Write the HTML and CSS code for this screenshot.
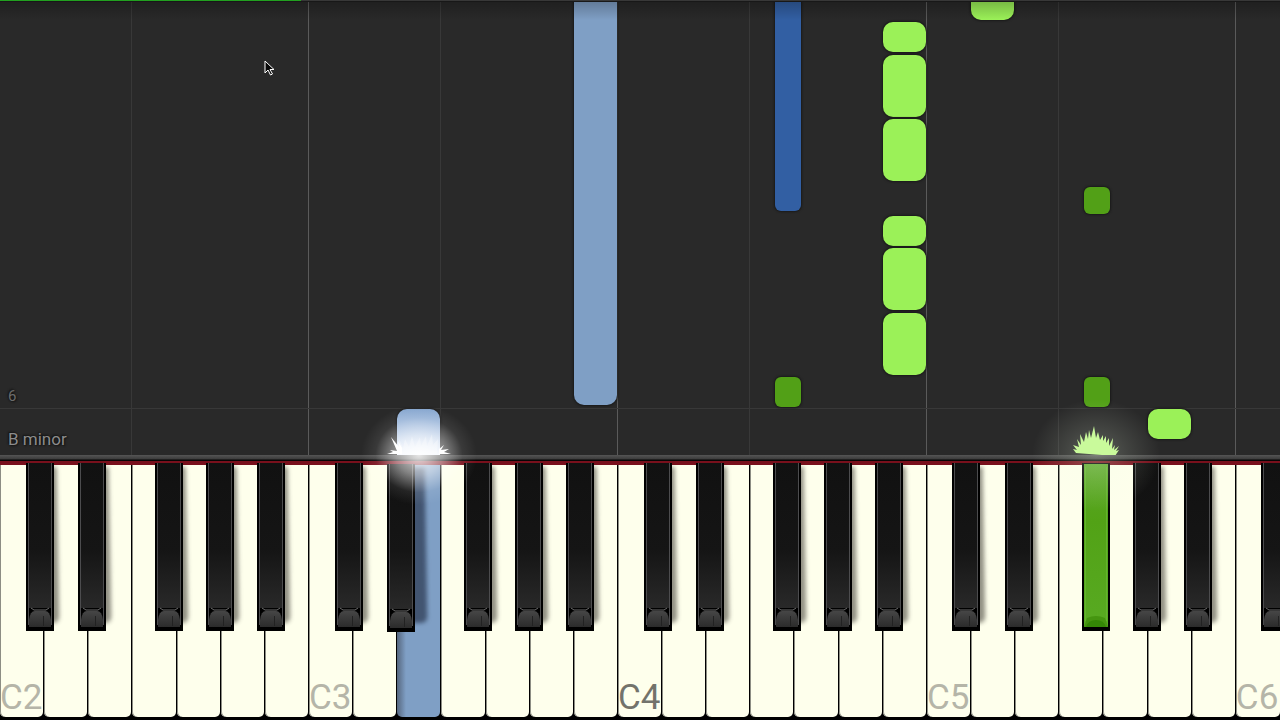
FILE: index.html
```html
<!DOCTYPE html>
<html lang="en">
<head>
<meta charset="utf-8">
<meta name="viewport" content="width=device-width, initial-scale=1">
<title>Piano roll</title>
<link rel="stylesheet" href="styles.css">
</head>
<body>
<main class="player">
  <section class="roll" aria-label="Falling notes">
    <div class="octave-lines" id="lines"></div>
    <div class="measure"></div>
    <span class="measure-number">6</span>
    <span class="chord">B minor</span>
    <div id="notes"></div>
    <div class="top-shade"></div>
    <div class="progress"><div class="progress-fill"></div></div>
    <svg class="cursor" width="12" height="18" viewBox="0 0 12 18" aria-hidden="true"><path d="M1 1v12l3-3 2.500 5 2-1-2.500-4.500h4z" fill="#080808" stroke="#fff" stroke-linejoin="round"/></svg>
  </section>
  <div class="rail"></div>
  <div class="felt"></div>
  <ul class="keyboard" id="keyboard"></ul>
  <div class="glow glow-blue">
    <svg class="spark" viewBox="0 0 64 36" aria-hidden="true">
      <path fill="#fff" d="M0 35l6-2-3-2 7 1-6-14 8 10-1-6 4 7v6zM64 35l-7-2 5-3-8 1 3-5-5 4v5z"/>
      <path fill="#fff" fill-opacity=".3" d="M10 35l2-15 4 9 2-9 4 8 3-11 3 11 5-10 1 9 5-10 1 10 5-12 1 11 5-6-1 15z"/>
    </svg>
  </div>
  <div class="glow glow-green">
    <svg class="spark" viewBox="0 0 64 36" aria-hidden="true"><path fill="#c9fa9b" d="M12 34l-3-4 4 1-4-5 6 2-2-8 4 6-1-11 4 8 2-10 2 7 1-9 2 8 3-12 2 12 2-6 2 8 3-5v6l3-5 0 7 3-5 0 8 4-8-1 11 3-4-1 5 5-4-3 5 3-1-4 6z"/></svg>
  </div>
</main>
<svg class="defs" aria-hidden="true">
  <defs>
    <linearGradient id="body" x1="0" y1="0" x2="0" y2="1"><stop offset="0" stop-color="#111"/><stop offset=".6" stop-color="#151515"/><stop offset="1" stop-color="#292929"/></linearGradient>
    <linearGradient id="lip" x1="0" y1="0" x2="0" y2="1"><stop offset="0" stop-color="#464646"/><stop offset="1" stop-color="#2b2b2b"/></linearGradient>
    <linearGradient id="leaf" x1="0" y1="0" x2="0" y2="1"><stop offset="0" stop-color="#5ba728"/><stop offset=".35" stop-color="#52a216"/><stop offset="1" stop-color="#58aa22"/></linearGradient>
    <symbol id="sharp" viewBox="0 0 28 168">
      <path d="M0 0h28v168H0z"/>
      <path d="M3 0h22v145H3z" fill="url(#body)"/>
      <path d="M2.500 0v162M25.500 0v162" stroke="#4c4c4e"/>
      <path d="M3 164v-7q1-9 6-9h10q5 0 6 9v7z" fill="url(#lip)"/>
      <path d="M5 145l3 2h12l3-2" fill="none" stroke="#6c6c6c"/>
      <path d="M17.500 153v10" stroke="#222"/>
    </symbol>
    <symbol id="sharp-lit" viewBox="0 0 28 168">
      <path d="M0 0h28v168H0z"/>
      <path d="M2 1h24v163H2z" fill="url(#leaf)"/>
      <path d="M3.500 4v154M24.500 4v154" stroke="#62b42c"/>
      <path d="M2 164l3-9q9-4 18 0l3 9z" fill="#459510"/>
      <path d="M4 164q2-7 10-7t10 7z" fill="#348706"/>
    </symbol>
  </defs>
</svg>
<script src="app.js"></script>
</body>
</html>
```
FILE: styles.css
```css
* { box-sizing: border-box; }
body { margin: 0; background: #000; font-family: Roboto, "Liberation Sans", sans-serif; overflow: hidden; }
.player { --keys: 29; position: relative; display: flex; flex-direction: column; min-height: 100vh; }
.defs { position: absolute; width: 0; height: 0; }

.roll { position: relative; flex: 1; background: #292929; overflow: hidden; }
.octave-lines { position: absolute; inset: 0; }
.line { position: absolute; top: 0; bottom: 0; left: calc(var(--k) * 100% / var(--keys) - 1px); width: 1px; background: #383838; }
.line-c { background: #5a5a5a; }
.measure { position: absolute; left: 0; right: 0; bottom: 46px; height: 1px; background: #383838; }
.measure-number, .chord { position: absolute; left: 8px; text-shadow: 1px 1px 2px #111, -1px -1px 2px #111; }
.measure-number { bottom: 50px; font-size: 15px; line-height: 18px; color: #6c6c6c; }
.chord { bottom: 6px; font-size: 17px; line-height: 20px; color: #8c8c8c; }

.note { position: absolute; left: calc(var(--k) * 100% / var(--keys)); width: calc(100% / var(--keys) - 1px); bottom: var(--start); height: var(--length); border-radius: 10px; box-shadow: 0 0 2px 1px #1a1a1a; }
.right { background: #9bf158; }
.left { background: #7f9fc5; }
.note.dark { width: 26px; border-radius: 6px; }
.right.dark { background: #52a017; }
.left.dark { background: #325fa3; }
.left.playing { background: linear-gradient(#86a6cf, #b4c9e5 50%, #f1f6ff); border-radius: 10px 10px 0 0; }

.top-shade { position: absolute; inset: 0 0 auto; height: 20px; background: linear-gradient(rgba(0, 0, 0, .25), transparent); }
.progress { position: absolute; inset: 0 0 auto; height: 2px; background: #383838; border-bottom: 1px solid #181818; }
.progress-fill { width: 23.5%; height: 1px; background: #22a020; }
.cursor { position: absolute; left: 264px; top: 60px; }

.rail { height: 6px; background: linear-gradient(#555, #3c3c3c 4px, #060606 5px); }
.felt { height: 4px; background: #79101c; }

.keyboard { display: grid; grid-template-columns: repeat(var(--keys), 1fr); height: 255px; margin: 0; padding: 0; list-style: none; background: #000; }
.key { position: relative; padding: 0 1px 3px 0; }
.key:last-child { padding-right: 0; }
.white { display: flex; align-items: flex-end; width: 100%; height: 100%; margin: 0; padding: 0; border: 0; border-radius: 0 0 5px 5px; background: #feffec; box-shadow: inset 1px 0 #8d8e84; font: 35px/38px Roboto, "Liberation Sans", sans-serif; color: #b5b5a8; white-space: nowrap; }
.middle { color: #73736b; }
.white.pressed { background: linear-gradient(90deg, #56677f, #7f9fc5 9px); box-shadow: none; }
.black { position: absolute; z-index: 2; top: -2px; left: var(--x); width: 28px; height: 168px; padding: 0; border: 0; background: none; }
.black svg { position: relative; display: block; width: 100%; height: 100%; }
.black::before { content: ""; position: absolute; top: 4px; left: 14px; width: 18px; height: 156px; border-radius: 0 0 6px 0; background: rgba(40, 35, 30, .5); transform: skewX(1deg); filter: blur(2px); }
.black.pressed::before { display: none; }
.black.over-pressed { height: 170px; }
.black.over-pressed::before { width: 25px; background: rgba(45, 60, 85, .75); }
.sharp-c { --x: 58%; }
.sharp-d { --x: 76%; }
.sharp-f { --x: 52%; }
.sharp-g { --x: 66%; }
.sharp-a { --x: 82%; }

.glow { position: absolute; z-index: 3; bottom: 200px; width: 130px; height: 130px; margin-left: -65px; pointer-events: none; }
.glow-blue { left: 32.700%; background: radial-gradient(ellipse 58px 50px, rgba(255, 255, 255, .85), rgba(255, 255, 255, .48) 40%, rgba(255, 255, 255, .08) 75%, transparent); }
.glow-green { left: 85.600%; background: radial-gradient(ellipse 64px 56px, rgba(240, 255, 230, .26), rgba(240, 255, 230, .12) 50%, transparent); }
.spark { position: absolute; left: 33px; bottom: 65px; width: 64px; height: 36px; }
```
FILE: app.js
```js
const names = ["C", "D", "E", "F", "G", "A", "B"];
const keyCount = 29;

// key position, start above the rail, length, classes
const notes = [
  [13, 50, 430, "left"],
  [17.56, 244, 230, "left dark"],
  [20, 403, 30, "right"],
  [20, 338, 62, "right"],
  [20, 274, 62, "right"],
  [20, 209, 30, "right"],
  [20, 145, 62, "right"],
  [20, 80, 62, "right"],
  [22, 435, 40, "right"],
  [24.56, 241, 27, "right dark"],
  [17.56, 48, 30, "right dark"],
  [24.56, 48, 30, "right dark"],
  [26, 16, 30, "right"],
  [9, 0, 46, "left playing"]
];

document.getElementById("notes").innerHTML = notes.map(([k, start, length, kind]) =>
  `<div class="note ${kind}" style="--k:${k};--start:${start}px;--length:${length}px"></div>`).join("");

let lines = "";
let keys = "";
for (let i = 0; i < keyCount; i++) {
  const name = names[i % 7];
  const octave = 2 + Math.floor(i / 7);
  if (i && (name === "C" || name === "F")) {
    lines += `<div class="line ${name === "C" ? "line-c" : ""}" style="--k:${i}"></div>`;
  }
  const text = name === "C" ? name + octave : "";
  const white = "white" + (i === 14 ? " middle" : "") + (i === 9 ? " pressed" : "");
  keys += `<li class="key"><button type="button" class="${white}" aria-label="${name}${octave}">${text}</button>`;
  if (name !== "E" && name !== "B") {
    const lit = i === 24;
    const state = lit ? " pressed" : i === 8 ? " over-pressed" : "";
    keys += `<button type="button" class="black sharp-${name.toLowerCase()}${state}" aria-label="${name} sharp ${octave}"><svg preserveAspectRatio="none"><use href="#${lit ? "sharp-lit" : "sharp"}"/></svg></button>`;
  }
  keys += "</li>";
}
document.getElementById("lines").innerHTML = lines;
document.getElementById("keyboard").innerHTML = keys;
```
